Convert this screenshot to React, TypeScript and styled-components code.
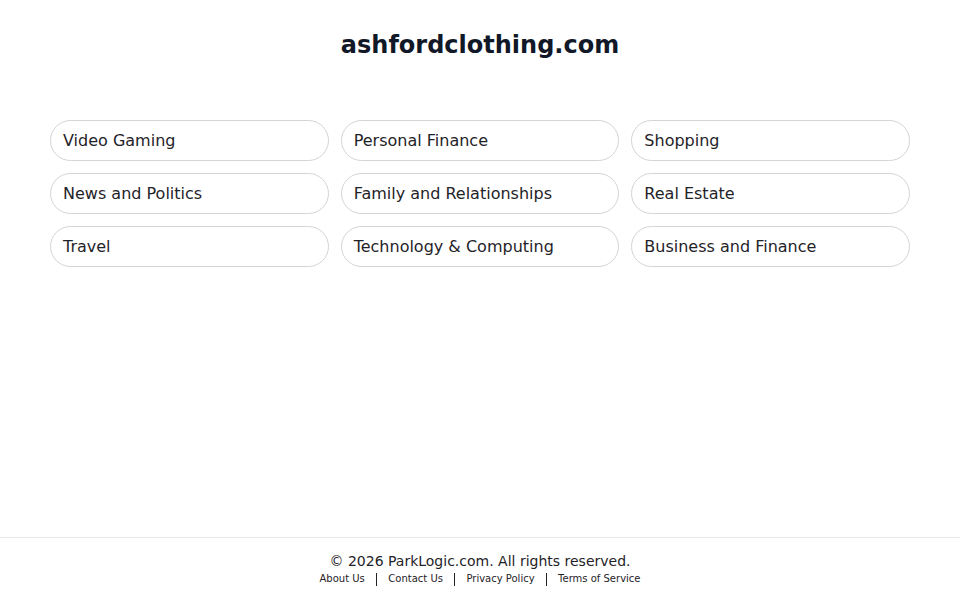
import React from "react";
import styled, { createGlobalStyle } from "styled-components";

const Global = createGlobalStyle`
  html, body { margin: 0; padding: 0; background: #fff; }
  body { font-family: "DejaVu Sans", "Liberation Sans", sans-serif; }
`;

const Page = styled.div`
  min-height: 100vh;
  display: flex;
  flex-direction: column;
`;

const Main = styled.main`
  flex: 1;
  display: flex;
  flex-direction: column;
  align-items: center;
  padding-top: 31px;
`;

const Title = styled.h1`
  margin: 0;
  font-size: 24px;
  line-height: 29px;
  font-weight: 700;
  color: #111827;
`;

const Grid = styled.div`
  margin-top: 60px;
  width: 860px;
  display: grid;
  grid-template-columns: repeat(3, 1fr);
  gap: 12px;
`;

const Pill = styled.a`
  display: flex;
  align-items: center;
  height: 41px;
  box-sizing: border-box;
  padding: 0 12px;
  border: 1px solid #d4d4d8;
  border-radius: 21px;
  font-size: 16px;
  color: #1f2328;
  text-decoration: none;
  background: #fff;
`;

const Footer = styled.footer`
  border-top: 1px solid #e5e7eb;
  height: 63px;
  box-sizing: border-box;
  display: flex;
  flex-direction: column;
  align-items: center;
  padding-top: 15px;
`;

const Copy = styled.div`
  font-size: 14px;
  line-height: 17px;
  color: #1f2328;
`;

const Links = styled.div`
  display: flex;
  align-items: center;
  gap: 11px;
  margin-top: 2px;
`;

const LinkItem = styled.a`
  font-size: 10px;
  line-height: 14px;
  color: #1f2328;
  text-decoration: none;
`;

const Sep = styled.span`
  display: inline-block;
  width: 1.5px;
  height: 13px;
  background: #1f2328;
`;

const topics = [
  "Video Gaming",
  "Personal Finance",
  "Shopping",
  "News and Politics",
  "Family and Relationships",
  "Real Estate",
  "Travel",
  "Technology & Computing",
  "Business and Finance",
];

const links = ["About Us", "Contact Us", "Privacy Policy", "Terms of Service"];

export default function App() {
  return (
    <Page>
      <Global />
      <Main>
        <Title>ashfordclothing.com</Title>
        <Grid>
          {topics.map((t) => (
            <Pill key={t} href="#">
              {t}
            </Pill>
          ))}
        </Grid>
      </Main>
      <Footer>
        <Copy>© 2026 ParkLogic.com. All rights reserved.</Copy>
        <Links>
          {links.map((l, i) => (
            <React.Fragment key={l}>
              {i > 0 && <Sep />}
              <LinkItem href="#">{l}</LinkItem>
            </React.Fragment>
          ))}
        </Links>
      </Footer>
    </Page>
  );
}
